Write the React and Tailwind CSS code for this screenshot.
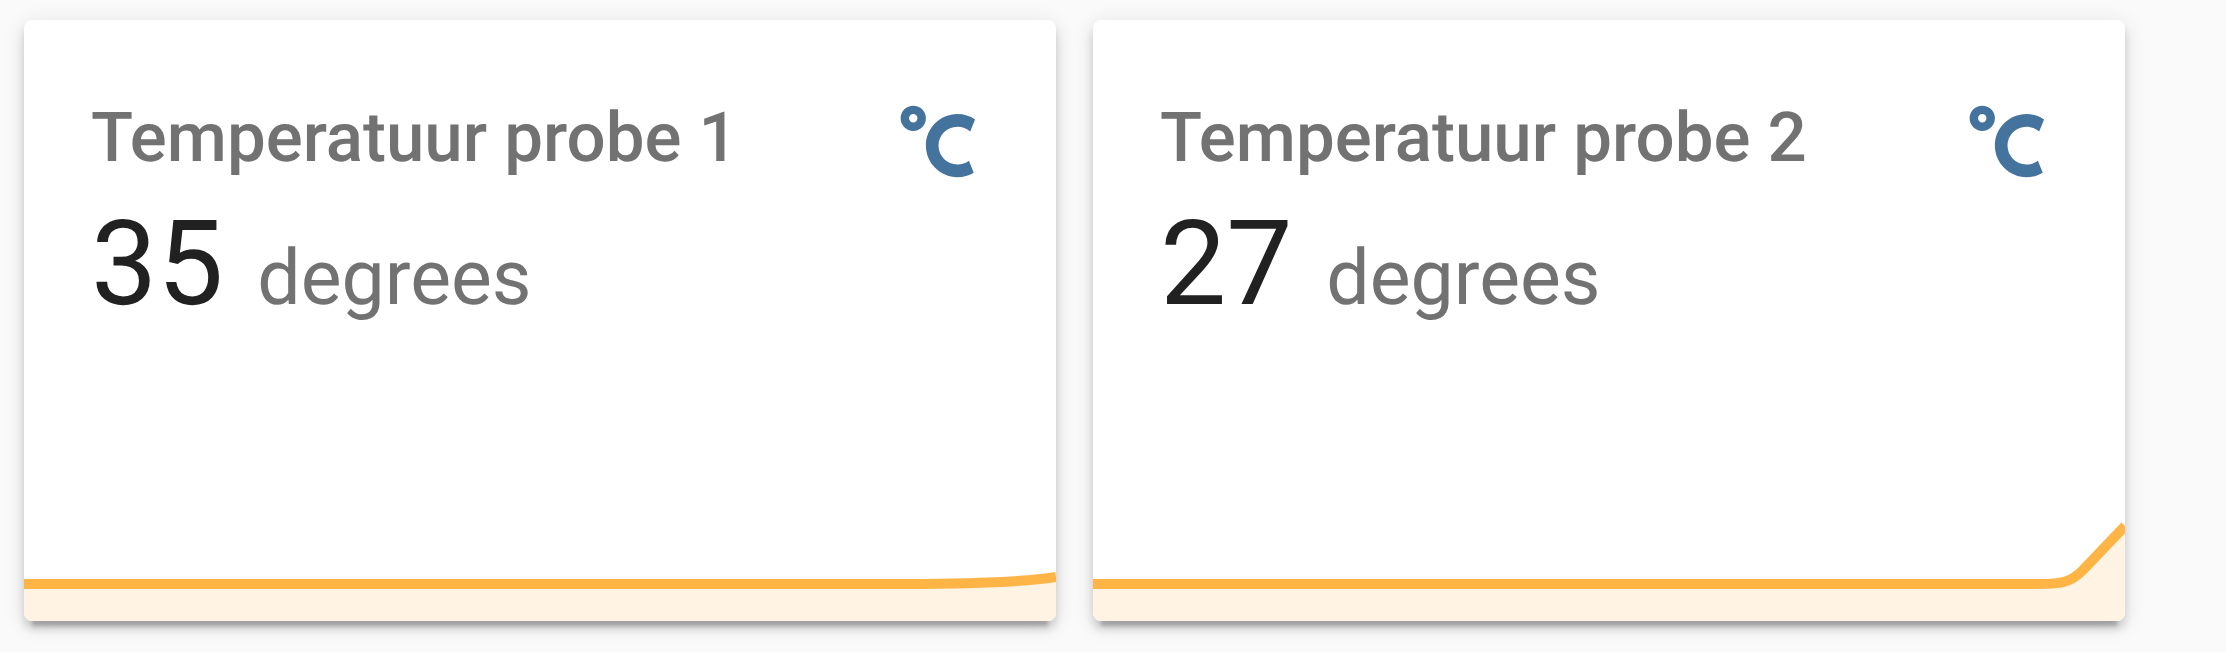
const sensors = [
  {
    name: "Temperatuur probe 1",
    value: "35",
    unit: "degrees",
    // flat line with a slight lift at the very end
    line: "M0,83 L880,83 C950,83 1000,81 1032,76",
  },
  {
    name: "Temperatuur probe 2",
    value: "27",
    unit: "degrees",
    line: "M0,83 L945,83 C970,83 978,81 990,69 L1032,25",
  },
];

const CelsiusIcon = () => (
  <svg viewBox="0 0 24 24" className="w-[101px] h-[101px]" fill="#44739e">
    <path d="M16.5,5C18.05,5 19.5,5.47 20.69,6.28L19.53,9.17C18.73,8.44 17.67,8 16.5,8C14,8 12,10 12,12.5C12,15 14,17 16.5,17C17.53,17 18.47,16.66 19.23,16.08L20.37,18.93C19.24,19.61 17.92,20 16.5,20C12.36,20 9,16.64 9,12.5C9,8.36 12.36,5 16.5,5M6,3A3,3 0 0,1 9,6A3,3 0 0,1 6,9A3,3 0 0,1 3,6A3,3 0 0,1 6,3M6,5A1,1 0 0,0 5,6A1,1 0 0,0 6,7A1,1 0 0,0 7,6A1,1 0 0,0 6,5Z" />
  </svg>
);

const SensorCard = ({ sensor }) => {
  return (
    <div className="w-[1032px] h-[601px] bg-white rounded-[8px] overflow-hidden flex flex-col shadow-[0_8px_8px_0_rgba(0,0,0,0.14),0_4px_21px_0_rgba(0,0,0,0.12),0_13px_4px_-8px_rgba(0,0,0,0.2)]">
      {/* Header */}
      <div className="flex justify-between pt-[34px] px-[67px]">
        <div className="text-[69px] leading-[168px] font-medium text-[#727272] whitespace-nowrap">
          {sensor.name}
        </div>
        <div className="pt-[39px]">
          <CelsiusIcon />
        </div>
      </div>

      {/* State */}
      <div className="-mt-[17px] px-[67px] text-[67px] leading-[118px] whitespace-nowrap">
        <span className="text-[118px] text-[#212121] mr-[17px]">{sensor.value}</span>{" "}
        <span className="text-[77px] text-[#727272]">{sensor.unit}</span>
      </div>

      {/* Graph */}
      <div className="mt-auto">
        <svg viewBox="0 0 1032 120" preserveAspectRatio="none" className="block w-full h-[120px]">
          <path d={`${sensor.line} L1032,120 L0,120 Z`} fill="#fff4e3" />
          <path d={sensor.line} fill="none" stroke="#ffb446" strokeWidth="10" strokeLinejoin="round" />
        </svg>
      </div>
    </div>
  );
};

export default function App() {
  return (
    <div className="min-h-[652px] bg-[#fafafa] font-['Roboto',sans-serif] [text-rendering:geometricPrecision] pl-[24px] pt-[20px] flex gap-[37px]">
      {sensors.map((s) => (
        <SensorCard key={s.name} sensor={s} />
      ))}
    </div>
  );
}
